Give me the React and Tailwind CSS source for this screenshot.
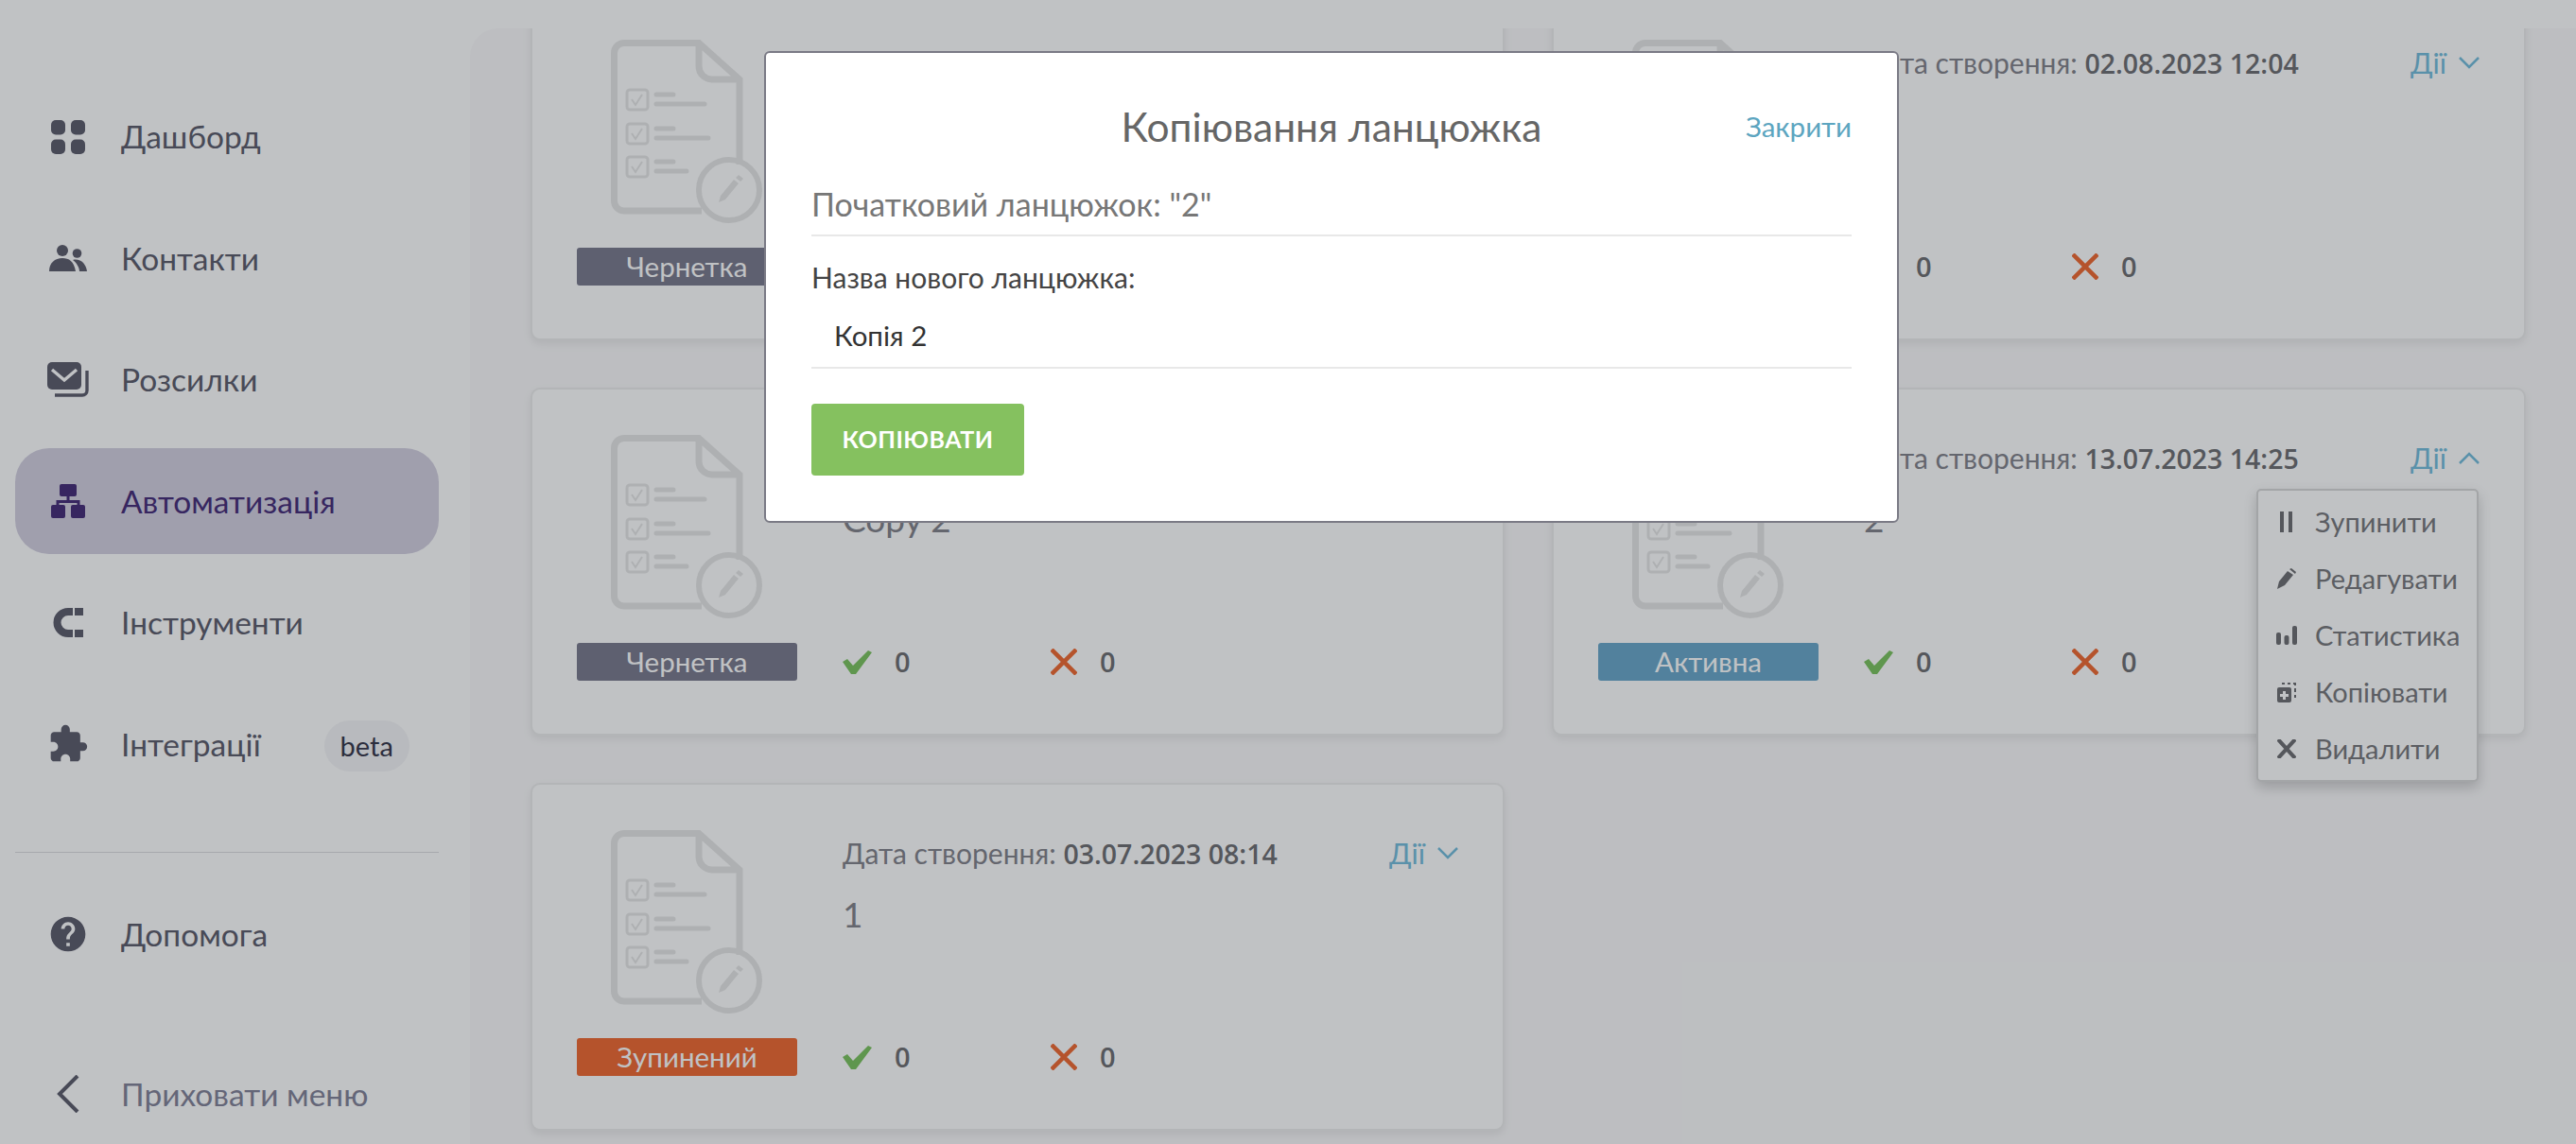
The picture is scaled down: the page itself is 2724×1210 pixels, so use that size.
import { MdExtension, MdHelp } from 'react-icons/md';

const fontStack = { fontFamily: '"Lato", "Noto Sans", sans-serif' };
const digitFont = { fontFamily: '"Open Sans", sans-serif' };

function DashboardIcon() {
  return (
    <svg width="36" height="36" viewBox="0 0 36 36" fill="#545364">
      <rect x="0" y="0" width="15" height="15.5" rx="5" />
      <rect x="21" y="0" width="15" height="15.5" rx="5" />
      <rect x="0" y="20.5" width="15" height="15.5" rx="5" />
      <rect x="21" y="20.5" width="15" height="15.5" rx="5" />
    </svg>
  );
}

function PeopleIcon() {
  return (
    <svg width="40" height="28" viewBox="0 0 40 28" fill="#545364">
      <circle cx="14" cy="6" r="6" />
      <path d="M0 28c0-9 6-14 14-14 7 0 12 3 14 14z" />
      <circle cx="29.5" cy="9" r="4.8" />
      <path d="M25 16c8-2 14 4 15 12h-8c0-4-3-9-7-12z" />
    </svg>
  );
}

function MailIcon() {
  return (
    <svg width="44" height="37" viewBox="0 0 44 37" fill="none">
      <rect x="0" y="0" width="36" height="29" rx="5" fill="#545364" />
      <path d="M5 8l13 11 13-11" stroke="#ffffff" strokeWidth="3.4" />
      <path d="M42 9v21a5 5 0 0 1-5 5H8" stroke="#545364" strokeWidth="3.4" />
    </svg>
  );
}

function SitemapIcon() {
  return (
    <svg width="36" height="36" viewBox="0 0 36 36" fill="#3b2070">
      <rect x="9" y="0" width="18" height="13" rx="2" />
      <rect x="0" y="22" width="15" height="14" rx="2" />
      <rect x="21" y="22" width="15" height="14" rx="2" />
      <path d="M16.5 12h3v5h11v6h-3v-3h-19v3h-3v-6h11z" />
    </svg>
  );
}

function MagnetIcon() {
  return (
    <svg width="32" height="31" viewBox="0 0 32 31" fill="#545364">
      <path d="M21 0h-5a15.5 15.5 0 0 0 0 31h5v-8h-5a7.5 7.5 0 0 1 0-15h5z" />
      <rect x="23" y="0" width="9" height="8" />
      <rect x="23" y="23" width="9" height="8" />
    </svg>
  );
}

function DocIcon() {
  const boxes = [53, 89, 124];
  const long = [99, 103, 80];
  return (
    <svg width="161" height="194" viewBox="0 0 161 194" fill="none" stroke="#e6e6e6">
      <path
        d="M14 3.5h79L136 42v90M96 181H14A10.5 10.5 0 0 1 3.500 170.500V14A10.500 10.500 0 0 1 14 3.500M93 3.500V28a14 14 0 0 0 14 14h29"
        strokeWidth="7"
      />
      {boxes.map((y, i) => (
        <g key={y}>
          <rect x="17" y={y} width="22" height="21" rx="3" strokeWidth="3" />
          <path d={`M22 ${y + 10}l4 6 7-11`} strokeWidth="2" />
          <path d={`M48 ${y + 5}h18M48 ${y + 15}h${long[i] - 48}`} strokeWidth="5" strokeLinecap="round" />
        </g>
      ))}
      <circle cx="125" cy="159" r="32" strokeWidth="6" />
      <path d="M114 172l2-7 14-17 5 4-14 17zM132 146l3-3 5 4-3 3z" fill="#e6e6e6" stroke="none" />
    </svg>
  );
}

function CheckMark() {
  return (
    <svg width="31" height="25" viewBox="0 0 31 25" fill="#74c056">
      <path d="M0 12l5-3 6 7L27 0l4 2-17 23h-5z" />
    </svg>
  );
}

function CrossMark() {
  return (
    <svg width="28" height="28" viewBox="0 0 28 28" stroke="#ef6026" strokeWidth="4.500" fill="none">
      <path d="M1 1l26 26M27 1L1 27" />
    </svg>
  );
}

function Chevron({ open }) {
  return (
    <svg width="22" height="13" viewBox="0 0 22 13" fill="none" stroke="#6db9da" strokeWidth="2.500">
      <path d={open ? 'M1 12l10-10 10 10' : 'M1 1l10 10 10-10'} />
    </svg>
  );
}

const menuItems = [
  {
    label: 'Зупинити',
    icon: (
      <svg width="20" height="22" viewBox="0 0 20 22" fill="#66666a">
        <rect x="3" y="0" width="4" height="22" />
        <rect x="12" y="0" width="4" height="22" />
      </svg>
    ),
  },
  {
    label: 'Редагувати',
    icon: (
      <svg width="20" height="22" viewBox="0 0 20 22" fill="#66666a">
        <path d="M0 22l2-8L11 3l6 4-9 11zM13 1l2-1 5 4-1 2z" />
      </svg>
    ),
  },
  {
    label: 'Статистика',
    icon: (
      <svg width="22" height="20" viewBox="0 0 22 20" fill="#66666a">
        <rect x="0" y="7" width="5" height="13" rx="2" />
        <rect x="8.5" y="10" width="5" height="10" rx="2" />
        <rect x="17" y="0" width="5" height="20" rx="2" />
      </svg>
    ),
  },
  {
    label: 'Копіювати',
    icon: (
      <svg width="20" height="21" viewBox="0 0 20 21" fill="#66666a">
        <path d="M2 5h11a2 2 0 0 1 2 2v12a2 2 0 0 1-2 2H2a2 2 0 0 1-2-2V7a2 2 0 0 1 2-2zm4 4v3H3v3h3v3h3v-3h3v-3H9V9z" fillRule="evenodd" />
        <path d="M5 0h3v2H5zM11 0h3v2h-3zM17 0h3v3h-2V2h-1zM18 6h2v4h-2zM18 13h2v3h-2z" />
      </svg>
    ),
  },
  {
    label: 'Видалити',
    icon: (
      <svg width="20" height="20" viewBox="0 0 20 20" stroke="#66666a" strokeWidth="4" fill="none">
        <path d="M1 0l18 20M19 0L1 20" />
      </svg>
    ),
  },
];

function Card({ date, name, status, statusClass, open, stats = true }) {
  return (
    <div className="relative flex h-[368px] rounded-[10px] border-2 border-[#ececec] bg-white pt-[48px] pr-[47px] pl-[47px] shadow-[0_4px_10px_rgba(0,0,0,0.08)]">
      <div className="flex w-[233px] shrink-0 flex-col items-center">
        <DocIcon />
        <div className={`mt-[26px] flex h-[40px] w-full items-center justify-center rounded-[3px] text-[29.5px] text-white ${statusClass}`}>
          {status}
        </div>
      </div>
      <div className="ml-[48px] flex h-[260px] min-w-0 flex-1 flex-col">
        <div className="flex h-[48px] items-center justify-between">
          {date && (
            <>
              <div className="text-[30px] whitespace-nowrap text-[#7c7b84]">
                Дата створення: <span className="text-[28.500px] font-semibold text-[#66666a]" style={digitFont}>{date}</span>
              </div>
              <div className="flex items-center gap-[13px] text-[30px] text-[#6db9da]">
                Дії <Chevron open={open} />
              </div>
            </>
          )}
        </div>
        {name && <div className="mt-[17px] text-[37px] leading-[48px] text-[#7c7b84]">{name}</div>}
        {stats && (
          <div className="mt-auto flex h-[40px] items-center">
            <div className="flex w-[220px] items-center gap-[24px]">
              <CheckMark />
              <span className="text-[29px] font-semibold text-[#66666a]" style={digitFont}>0</span>
            </div>
            <div className="flex items-center gap-[24px]">
              <CrossMark />
              <span className="text-[29px] font-semibold text-[#66666a]" style={digitFont}>0</span>
            </div>
          </div>
        )}
      </div>
      {open && (
        <div className="absolute top-[105px] right-[48px] z-10 flex w-[235px] flex-col rounded-[5px] border-2 border-[#d6d6d6] bg-white pt-[3px] pb-[3px] shadow-[0_6px_14px_rgba(0,0,0,0.2)]">
          {menuItems.map((item) => (
            <div key={item.label} className="flex h-[60px] items-center text-[29px] whitespace-nowrap text-[#707074]">
              <span className="flex w-[60px] shrink-0 justify-center">{item.icon}</span>
              {item.label}
            </div>
          ))}
        </div>
      )}
    </div>
  );
}

function NavItem({ icon, label, active, children }) {
  return (
    <div className={`flex h-[112px] items-center gap-[34px] rounded-[36px] pl-[34px] text-[33.500px] ${active ? 'bg-[#d1cddf] text-[#3b2070]' : 'text-[#545364]'}`}>
      <span className="flex w-[44px] shrink-0 justify-center">{icon}</span>
      {label}
      {children}
    </div>
  );
}

export default function App() {
  return (
    <div className="relative flex h-[1210px] w-[2724px] overflow-hidden bg-white" style={fontStack}>
      <aside className="flex w-[497px] shrink-0 flex-col pt-[88.500px] pr-[33px] pl-[16px]">
        <nav className="flex flex-col gap-[16.5px]">
          <NavItem icon={<DashboardIcon />} label="Дашборд" />
          <NavItem icon={<PeopleIcon />} label="Контакти" />
          <NavItem icon={<MailIcon />} label="Розсилки" />
          <NavItem icon={<SitemapIcon />} label="Автоматизація" active />
          <NavItem icon={<MagnetIcon />} label="Інструменти" />
          <NavItem icon={<MdExtension size={46} color="#545364" />} label="Інтеграції">
            <span className="mt-[3px] ml-[33px] flex h-[54px] w-[90px] items-center justify-center rounded-full bg-[#f4f4f6] text-[29px] text-[#2b2b40]">beta</span>
          </NavItem>
        </nav>
        <div className="mt-[57.500px] h-[2px] bg-[#dcdcde]" />
        <div className="mt-[30px]">
          <NavItem icon={<MdHelp size={48} color="#545364" />} label="Допомога" />
        </div>
        <div className="mt-[59px] flex h-[112px] items-center gap-[34px] pl-[34px] text-[33.500px] text-[#7c7b93]">
          <span className="flex w-[44px] shrink-0 justify-center">
            <svg width="24" height="40" viewBox="0 0 24 40" fill="none" stroke="#545364" strokeWidth="4">
              <path d="M22 1L3 20l19 19" />
            </svg>
          </span>
          Приховати меню
        </div>
      </aside>

      <main className="min-w-0 flex-1 pt-[30px]">
        <div className="h-full overflow-hidden rounded-tl-[30px] bg-[#fbfafb]">
          <div className="-mt-[38px] grid grid-cols-[1030px_1030px] gap-[50px] pl-[64px]">
            <Card status="Чернетка" statusClass="bg-[#737387]" stats={false} />
            <Card date="02.08.2023 12:04" status="Чернетка" statusClass="bg-[#737387]" />
            <Card name="Copy 2" status="Чернетка" statusClass="bg-[#737387]" />
            <Card date="13.07.2023 14:25" name="2" status="Активна" statusClass="bg-[#62a3c8]" open />
            <Card date="03.07.2023 08:14" name="1" status="Зупинений" statusClass="bg-[#ef6026]" />
          </div>
        </div>
      </main>

      {/* затемнення під модалкою */}
      <div className="absolute inset-0 z-20 bg-[#2d343b]/30" />
      <div className="absolute top-[54px] left-[808px] z-30 flex h-[499px] w-[1200px] flex-col rounded-[6px] border-2 border-[#7a7a85] bg-white px-[48px] pt-[51px]">
        <div className="relative h-[54px] text-center text-[42.500px] leading-[54px] text-[#666666]">
          Копіювання ланцюжка
          <span className="absolute top-0 right-0 text-[29.500px] text-[#5ca5c0]">Закрити</span>
        </div>
        <div className="mt-[31px] border-b-2 border-[#e8e8e8] pb-[8px] text-[34px] leading-[48px] text-[#777777]">
          Початковий ланцюжок: "2"
        </div>
        <div className="mt-[23px] text-[30px] leading-[40px] text-[#444444]">Назва нового ланцюжка:</div>
        <div className="mt-[15px] flex h-[62px] items-center border-b-2 border-[#e8e8e8] pb-[6px] pl-[24px] text-[29.500px] text-[#333333]">
          Копія 2
        </div>
        <div className="mt-[37px] flex h-[76px] w-[225px] items-center justify-center rounded-[4px] bg-[#85c15f] text-[25px] font-bold tracking-[0.5px] text-white uppercase">
          Копіювати
        </div>
      </div>
    </div>
  );
}
